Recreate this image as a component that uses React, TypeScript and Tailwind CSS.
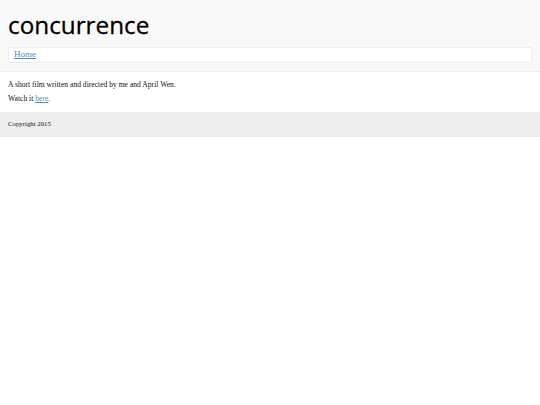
export default function App() {
  return (
    <div className="min-h-[405px] bg-white" style={{ fontFamily: '"Liberation Serif", serif' }}>
      <header className="bg-[#f9f9f9] border-b border-[#eeeeee] px-2 pt-[9px] pb-2">
        <h1 className="text-[24.3px] leading-[32px] text-black [-webkit-text-stroke:0.3px_black]" style={{ fontFamily: '"Open Sans", sans-serif' }}>
          concurrence
        </h1>
        <nav className="mt-[6px] h-4 bg-white border border-[#eeeeee] px-[5px] flex items-center">
          <a href="#" className="text-[9px] text-[#4a8cc2] underline">Home</a>
        </nav>
      </header>
      <main className="px-2 pt-[6px] pb-[6px] text-[7.6px] text-[#111]">
        <p className="leading-[14px]">A short film written and directed by me and April Wen.</p>
        <p className="leading-[14px]">
          Watch it <a href="#" className="text-[#4a8cc2] underline">here</a>.
        </p>
      </main>
      <footer className="bg-[#eeeeee] px-2 h-[25px] flex items-center text-[6.8px] text-[#111]">
        Copyright 2015
      </footer>
    </div>
  )
}
